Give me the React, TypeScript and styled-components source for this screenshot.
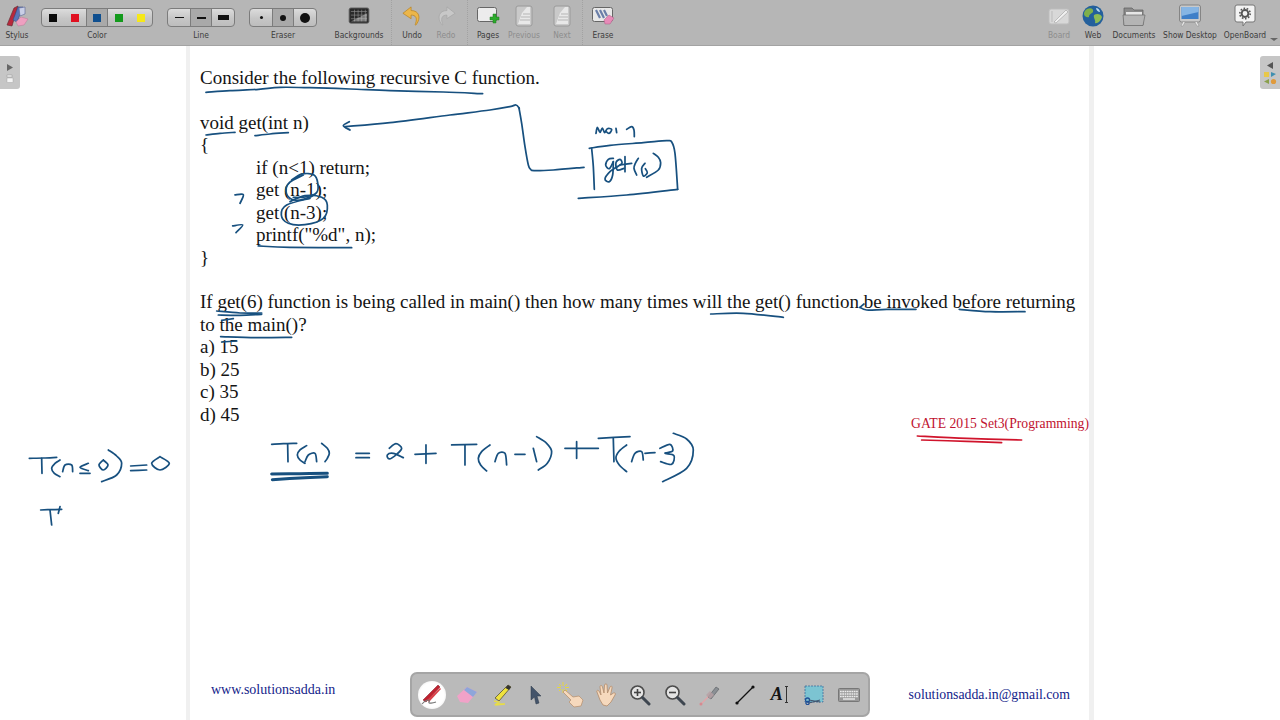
import * as React from 'react';
import styled, { createGlobalStyle } from 'styled-components';

const GlobalStyle = createGlobalStyle`
  html, body { margin: 0; padding: 0; background: #fff; }
  #root { width: 1280px; height: 720px; overflow: hidden; }
`;

const Screen = styled.div`
  position: relative;
  width: 1280px;
  height: 720px;
  display: flex;
  flex-direction: column;
  overflow: hidden;
  background: #fff;
`;

/* ---------- top toolbar ---------- */

const Toolbar = styled.div`
  height: 45px;
  flex: none;
  display: flex;
  background: #b6b6b6;
  border-bottom: 1px solid #a3a3a3;
  font-family: 'DejaVu Sans Condensed', 'DejaVu Sans', sans-serif;
`;

const Tool = styled.div<{ $w: number }>`
  width: ${p => p.$w}px;
  flex: none;
  height: 45px;
  display: flex;
  flex-direction: column;
  align-items: center;
`;

const Divider = styled.div<{ $before?: number; $after?: number }>`
  width: 0;
  height: 45px;
  flex: none;
  border-left: 1px dotted #a2a2a2;
  margin: 0 ${p => p.$after ?? 0}px 0 ${p => p.$before ?? 0}px;
`;

const IconSlot = styled.div`
  height: 29px;
  display: flex;
  align-items: center;
  justify-content: center;
  padding-top: 2px;
  box-sizing: border-box;
`;

const Label = styled.div<{ $off?: boolean }>`
  font-size: 8.4px;
  line-height: 12px;
  white-space: nowrap;
  color: ${p => (p.$off ? '#8d8d8d' : '#3c3c3c')};
`;

const Segments = styled.div`
  display: flex;
  height: 19px;
  box-sizing: border-box;
  margin: 8px 0 2px;
  border: 1px solid #7c7c7c;
  border-radius: 4px;
  overflow: hidden;
  background: linear-gradient(#dcdcdc, #c6c6c6 55%, #bdbdbd);
`;

const Segment = styled.div<{ $on?: boolean; $w: number }>`
  width: ${p => p.$w}px;
  flex: none;
  display: flex;
  align-items: center;
  justify-content: center;
  box-sizing: border-box;
  background: ${p => (p.$on ? '#a9a9a9' : 'transparent')};
  border-left: ${p => (p.$on ? '1px solid #7c7c7c' : 'none')};
  border-right: ${p => (p.$on ? '1px solid #7c7c7c' : 'none')};
`;

const Swatch = styled.span<{ $c: string }>`
  width: 8px;
  height: 8px;
  background: ${p => p.$c};
`;

const LineSample = styled.span<{ $w: number; $h: number }>`
  width: ${p => p.$w}px;
  height: ${p => p.$h}px;
  background: #111;
`;

const Dot = styled.span<{ $d: number }>`
  width: ${p => p.$d}px;
  height: ${p => p.$d}px;
  border-radius: 50%;
  background: #111;
`;

const Spacer = styled.div<{ $w?: number }>`
  flex: ${p => (p.$w ? 'none' : '1')};
  width: ${p => (p.$w ? `${p.$w}px` : 'auto')};
`;

const MoreArrow = styled.div`
  width: 0;
  height: 0;
  margin: 38px 0 0 2px;
  border-left: 4px solid transparent;
  border-right: 4px solid transparent;
  border-top: 3px solid #666;
`;

/* ---------- icons ---------- */

const StylusIcon = () => (
  <svg width="24" height="24" viewBox="0 0 24 24">
    <path d="M2 21 L9 4 L13 2 L7 22 Z" fill="#b8283c" stroke="#5a2a30" strokeWidth=".6" />
    <path d="M8 16 L13 3 L18 3 L12 18 Z" fill="#5b74b8" stroke="#394a7c" strokeWidth=".6" />
    <path d="M14 4 L20 3 L20 10 L15 12 Z" fill="#c9cfe6" stroke="#5a6796" strokeWidth=".6" />
    <path d="M11 18 L16 13 L23 15 L19 21 L13 22 Z" fill="#ee9fc0" stroke="#b87a96" strokeWidth=".5" />
  </svg>
);

const BackgroundsIcon = () => (
  <svg width="22" height="18" viewBox="0 0 24 20">
    <rect x="1" y="1" width="22" height="17" rx="2" fill="#2a2a2a" stroke="#6b6b6b" />
    <path d="M3 5 H21 M3 9 H21 M3 13 H21 M7 3 V16 M11 3 V16 M15 3 V16 M19 3 V16" stroke="#8c8c8c" strokeWidth=".7" />
    <path d="M3 16 L21 7 V16 Z" fill="#d9d9d9" opacity=".45" />
  </svg>
);

const UndoIcon = () => (
  <svg width="20" height="24" viewBox="0 0 22 24">
    <path d="M10 2 L1 9 L10 15 V11 C15 11 17 14 15 20 C14 22 15 23 16 21 C21 14 19 6 10 6 Z" fill="#ecb64a" stroke="#b78324" strokeWidth=".8" strokeLinejoin="round" />
  </svg>
);

const RedoIcon = () => (
  <svg width="20" height="24" viewBox="0 0 22 24">
    <path d="M12 2 L21 9 L12 15 V11 C7 11 5 14 7 20 C8 22 7 23 6 21 C1 14 3 6 12 6 Z" fill="#c8c8c8" stroke="#a6a6a6" strokeWidth=".8" strokeLinejoin="round" />
  </svg>
);

const PagesIcon = () => (
  <svg width="24" height="22" viewBox="0 0 24 22">
    <rect x="1.5" y="2.5" width="19" height="14" rx="2" fill="#ececec" stroke="#666" />
    <path d="M14 12 H17 V9 H20 V12 H23 V15 H20 V18 H17 V15 H14 Z" fill="#2cab2c" stroke="#1c7a1c" strokeWidth=".5" />
  </svg>
);

const PageCurlIcon = () => (
  <svg width="20" height="22" viewBox="0 0 20 22">
    <rect x="2" y="1" width="16" height="20" rx="2" fill="#c9c9c9" stroke="#9a9a9a" />
    <path d="M4 19 L8 8 L13 2 H16 V19 Z" fill="#e8e8e8" />
    <path d="M9 9 H16 M7 12 H16 M6 15 H16" stroke="#b5b5b5" strokeWidth="1" />
  </svg>
);

const EraseIcon = () => (
  <svg width="24" height="22" viewBox="0 0 24 22">
    <rect x="1.5" y="2.5" width="20" height="14" rx="2" fill="#e8e8e8" stroke="#666" />
    <path d="M5 5 L9 13 M9 5 L13 13 M13 5 L16 11" stroke="#6a7ea8" strokeWidth="2.2" />
    <path d="M13 15 L18 10 L23 13 L19 19 L14 19 Z" fill="#e78ab8" stroke="#a85f85" strokeWidth=".5" />
  </svg>
);

const BoardIcon = () => (
  <svg width="22" height="20" viewBox="0 0 22 20">
    <rect x="1" y="3" width="20" height="15" rx="2" fill="#d8d8d8" stroke="#bdbdbd" />
    <path d="M6 16 L18 4 L20 6 L8 17 Z" fill="#f0f0f0" stroke="#9f9f9f" strokeWidth=".6" />
    <path d="M4 5 V16" stroke="#bbb" strokeWidth="1" />
  </svg>
);

const GlobeIcon = () => (
  <svg width="22" height="22" viewBox="0 0 22 22">
    <circle cx="11" cy="11" r="10.5" fill="#24609c" />
    <path d="M5 4 C9 2 12 4 11 7 C9 9 7 9 7 12 C5 13 2 11 2 9 C2 7 3 5 5 4 Z" fill="#7fb04a" />
    <path d="M12 10 C15 8 19 9 20 12 C19 16 15 19 13 18 C14 15 11 13 12 10 Z" fill="#8dbb55" />
    <path d="M14 3 C16 3 18 5 18 7 C16 7 14 5 14 3 Z" fill="#b5d8f0" />
  </svg>
);

const FolderIcon = () => (
  <svg width="24" height="22" viewBox="0 0 24 22">
    <path d="M2 3 H10 L12 5 H21 V20 H2 Z" fill="#8b8b8b" stroke="#5d5d5d" strokeWidth=".7" />
    <path d="M4 7 H20 V11 H4 Z" fill="#e6e6e6" />
    <path d="M1 10 H23 L21 20.5 H2 Z" fill="#b4b4b4" stroke="#6a6a6a" strokeWidth=".7" />
  </svg>
);

const DesktopIcon = () => (
  <svg width="24" height="24" viewBox="0 0 24 24">
    <rect x="1.5" y="1" width="21" height="17" rx="2" fill="#c9c9c9" stroke="#858585" />
    <rect x="3.5" y="3" width="17" height="12" fill="#3f7fc8" />
    <path d="M3.5 3 H20.5 V8 L3.5 12 Z" fill="#86b5e4" />
    <path d="M5 18 L3 22 H5 L7 18 M19 18 L21 22 H19 L17 18" fill="#eee" stroke="#888" strokeWidth=".5" />
  </svg>
);

const OpenBoardIcon = () => (
  <svg width="22" height="24" viewBox="0 0 22 24">
    <path d="M3 1 H19 Q21 1 21 3 V16 Q21 18 19 18 H12 L9 22 V18 H3 Q1 18 1 16 V3 Q1 1 3 1 Z" fill="#f3f3f3" stroke="#777" />
    <circle cx="11" cy="9.5" r="3.4" fill="none" stroke="#555" strokeWidth="2" />
    <circle cx="11" cy="9.5" r="5.2" fill="none" stroke="#555" strokeWidth="1.6" strokeDasharray="1.6 1.6" />
  </svg>
);

/* palette icons */

const PenIcon = () => (
  <svg width="24" height="22" viewBox="0 0 24 22">
    <path d="M3 16 L18 1 L20 3 L6 18 Z" fill="#c02230" stroke="#7b1622" strokeWidth=".5" />
    <path d="M7 16 L20 4 L21 5 L9 18 Z" fill="#d84048" />
    <path d="M2 20 C6 15 11 15 9 18 C8 20 13 19 16 18" fill="none" stroke="#777" strokeWidth="1.1" />
  </svg>
);

const EraserIcon = () => (
  <svg width="22" height="20" viewBox="0 0 22 20">
    <path d="M1 11 L11 2 L21 7 L12 18 L4 17 Z" fill="#f1a2c8" />
    <path d="M8 5 L11 2 L21 7 L17 12 Z" fill="#8ea6da" />
  </svg>
);

const MarkerIcon = () => (
  <svg width="22" height="22" viewBox="0 0 22 22">
    <path d="M4 14 L17 1 L20 3 L8 17 Z" fill="#efe23e" stroke="#55523a" strokeWidth=".8" />
    <path d="M17 1 L20 3 L18 6 L14.5 4 Z" fill="#333" />
    <path d="M3 17 L8 18 L5 20 L14 20 L4 21" fill="none" stroke="#e8dd45" strokeWidth="1.4" />
  </svg>
);

const ArrowIcon = () => (
  <svg width="14" height="20" viewBox="0 0 14 20">
    <path d="M2 1 L12 11 L8 11 L10 18 L7 19 L5.5 12 L2 15 Z" fill="#44546a" stroke="#2d3848" strokeWidth=".5" />
  </svg>
);

const skin = '#f6d9bd';

const PointerIcon = () => (
  <svg width="28" height="26" viewBox="0 0 28 26">
    <path d="M6 0 V4 M6 7 V11 M0 5.5 H4 M8 5.5 H12 M2 2 L4 4 M10 2 L8 4 M2 9 L4 7 M10 9 L8 7" stroke="#e6d640" strokeWidth="1" />
    <path d="M8 8 L16 15 L22 14 L26 18 L24 24 L17 25 L12 20 L14 18 L6 10 Z" fill={skin} stroke="#b48c6a" strokeWidth=".7" />
  </svg>
);

const HandIcon = () => (
  <svg width="22" height="24" viewBox="0 0 22 24">
    <path d="M5 17 L2 9 C1 7 3 7 4 8 L6 12 L5 4 C5 2 7 2 7.5 4 L9 10 L9.5 2 C10 0.5 12 .5 12 2 L12.5 10 L15 4 C16 2.5 17.5 3 17 5 L15.5 12 L18.5 10 C20 9.5 21 10.5 20 12 L16 19 L12 23 L8 22 Z" fill={skin} stroke="#b48c6a" strokeWidth=".8" />
  </svg>
);

const ZoomIcon = ({ plus }: { plus?: boolean }) => (
  <svg width="22" height="22" viewBox="0 0 22 22">
    <circle cx="8.5" cy="8.5" r="6.5" fill="#e4e4e4" stroke="#4b4b4b" strokeWidth="1.6" />
    <path d="M5 8.5 H12" stroke="#444" strokeWidth="1.6" />
    {plus && <path d="M8.5 5 V12" stroke="#444" strokeWidth="1.6" />}
    <path d="M13.5 13.5 L20 20" stroke="#3e4650" strokeWidth="3" strokeLinecap="round" />
  </svg>
);

const LaserIcon = () => (
  <svg width="22" height="22" viewBox="0 0 22 22">
    <path d="M1 21 L11 11" stroke="#e3a4a8" strokeWidth="1.2" />
    <path d="M9 13 L17 3 L20 5 L12 15 Z" fill="#8a8f94" stroke="#55595e" strokeWidth=".6" />
    <path d="M7 11 L11 7 L15 11 L11 15 Z" fill="#b8a0a4" opacity=".8" />
    <circle cx="2" cy="20" r="1.5" fill="#d68a90" />
  </svg>
);

const LineIcon = () => (
  <svg width="20" height="20" viewBox="0 0 20 20">
    <path d="M2 18 L18 2" stroke="#111" strokeWidth="1.3" />
    <circle cx="2" cy="18" r="1.6" fill="#111" />
    <circle cx="18" cy="2" r="1.6" fill="#111" />
  </svg>
);

const TextTool = styled.span`
  display: flex;
  align-items: center;
  font-family: 'Liberation Serif', serif;
  font-size: 18px;
  font-weight: 700;
  font-style: italic;
  color: #151515;
`;

const Caret = styled.span`
  position: relative;
  width: 1px;
  height: 17px;
  margin: 0 1px 0 3px;
  background: #333;
  &::before, &::after {
    content: '';
    position: absolute;
    left: -1px;
    width: 3px;
    height: 1px;
    background: #333;
  }
  &::before { top: 0; }
  &::after { bottom: 0; }
`;

const CaptureIcon = () => (
  <svg width="20" height="20" viewBox="0 0 20 20">
    <rect x="1" y="1" width="18" height="16" fill="#7cc4d2" stroke="#3c6f9c" strokeWidth=".8" strokeDasharray="2 1" />
    <circle cx="3.5" cy="15" r="2" fill="none" stroke="#1f4f96" strokeWidth="1.3" />
    <circle cx="3.5" cy="18" r="1.6" fill="none" stroke="#1f4f96" strokeWidth="1.3" />
    <path d="M5 15 L16 17 M5 18 L16 15" stroke="#40536e" strokeWidth="1" />
  </svg>
);

const KeyboardIcon = () => (
  <svg width="22" height="14" viewBox="0 0 22 14">
    <rect x=".5" y=".5" width="21" height="13" rx="1" fill="#999" stroke="#777" />
    <path d="M2 3.5 H20 M2 6 H20 M2 8.5 H20" stroke="#ececec" strokeWidth="1.3" strokeDasharray="1.7 .6" />
    <path d="M5 11 H17" stroke="#ececec" strokeWidth="1.4" />
  </svg>
);

/* ---------- stage ---------- */

const Stage = styled.div`
  flex: 1;
  min-height: 0;
  display: flex;
`;

const Sheet = styled.div`
  width: 908px;
  margin-left: 186px;
  box-sizing: border-box;
  display: flex;
  flex-direction: column;
  background: #fff;
  border-left: 4px solid #f0f0f0;
  border-right: 5px solid #f0f0f0;
  padding: 21px 0 0 10px;
  font-family: 'Liberation Serif', serif;
  color: #141414;
`;

const TextLine = styled.div<{ $indent?: boolean }>`
  height: 22.45px;
  line-height: 22.45px;
  font-size: 19px;
  white-space: nowrap;
  padding-left: ${p => (p.$indent ? '56px' : '0')};
`;

const Source = styled.div`
  align-self: flex-end;
  margin-top: -11px;
  font-size: 13.7px;
  line-height: 18px;
  color: #bf1230;
  white-space: nowrap;
`;

const SheetFooter = styled.div`
  margin-top: auto;
  padding: 0 19px 16px 11px;
  display: flex;
  justify-content: space-between;
  align-items: flex-start;
  font-size: 14px;
  line-height: 18px;
  color: #14238a;
`;

const MailLink = styled.span`
  margin-top: 5px;
  font-size: 13.8px;
`;

const SideTab = styled.div<{ $side: 'left' | 'right' }>`
  position: absolute;
  top: 56px;
  ${p => p.$side}: 0;
  width: 20px;
  height: 33px;
  background: #c6c6c6;
  border-radius: ${p => (p.$side === 'left' ? '0 3px 3px 0' : '3px 0 0 3px')};
  display: flex;
  align-items: center;
  justify-content: center;
`;

/* ---------- floating palette ---------- */

const Palette = styled.div`
  position: absolute;
  left: 410px;
  top: 672px;
  width: 460px;
  height: 45px;
  box-sizing: border-box;
  padding-left: 3px;
  display: flex;
  align-items: center;
  background: #bababa;
  border: 2px solid #a5a5a5;
  border-radius: 7px;
`;

const PaletteButton = styled.div<{ $on?: boolean }>`
  width: 34.7px;
  height: 34px;
  flex: none;
  display: flex;
  align-items: center;
  justify-content: center;
  position: relative;
  &::before {
    content: '';
    display: ${p => (p.$on ? 'block' : 'none')};
    position: absolute;
    left: 3px;
    top: 3px;
    width: 28px;
    height: 28px;
    border-radius: 50%;
    background: radial-gradient(#fff 60%, #dcdcdc);
  }
  > * {
    position: relative;
  }
`;

/* ---------- ink ---------- */

const InkLayer = styled.svg`
  position: absolute;
  left: 0;
  top: 0;
  width: 1280px;
  height: 720px;
  pointer-events: none;
`;

const smooth = (list: string) => {
  const n = list.trim().split(/\s+/).map(Number);
  const p: number[][] = [];
  for (let i = 0; i < n.length; i += 2) p.push([n[i], n[i + 1]]);
  let d = `M${p[0][0]} ${p[0][1]}`;
  for (let i = 0; i < p.length - 1; i++) {
    const a = p[Math.max(i - 1, 0)], b = p[i], c = p[i + 1], e = p[Math.min(i + 2, p.length - 1)];
    d += ` C${(b[0] + (c[0] - a[0]) / 6).toFixed(1)} ${(b[1] + (c[1] - a[1]) / 6).toFixed(1)} ${(c[0] - (e[0] - b[0]) / 6).toFixed(1)} ${(c[1] - (e[1] - b[1]) / 6).toFixed(1)} ${c[0]} ${c[1]}`;
  }
  return d;
};

// stroke lists are in the coordinates of a 3x crop, origin given by x / y
const inkGroups = [
  {
    x: 190, y: 60, w: 5.2, lines: [
      '48 97 120 92 206 88 270 82 360 83 480 87 600 92 760 96 878 101',
      '48 225 90 220 135 217',
      '195 227 240 222 295 218',
      '478 185 460 197 480 210',
      '466 200 600 188 780 165 900 150 960 140 978 135 988 145',
      '305 360 335 342 372 345 383 368 380 398 340 418 305 418 288 395 298 368 340 345',
      '300 425 345 407 395 412 412 435 400 475 345 494 295 490 274 465 290 435 360 415',
      '310 412 340 412 372 404',
      '135 405 160 404 150 430',
      '128 498 158 495 138 518',
      '205 558 300 562 485 563',
    ],
  },
  {
    x: 510, y: 100, w: 5.2, lines: [
      '27 24 35 70 45 140 55 195 62 208 72 212 130 210 222 202',
      '238 145 300 136 400 128 470 122 485 126 495 160 503 268',
      '245 145 250 200 253 268',
      '205 295 350 285 503 268',
      '258 100 262 82 270 97 277 84 284 98 292 86 305 88 298 100 290 96',
      '318 85 320 98',
      '350 88 365 80 372 90 373 110',
      '310 175 295 178 287 195 298 206 310 185',
      '310 185 308 225 298 245 285 237 300 215 322 200',
      '322 200 336 190 330 178 318 188 322 210 342 205',
      '345 170 345 215',
      '330 195 365 190',
      '385 175 376 190 372 205 380 225',
      '405 190 395 205 400 228 412 218 406 206',
      '430 160 445 172 452 188 445 210 410 232',
    ],
  },
  {
    x: 190, y: 285, w: 5.2, lines: [
      '80 78 150 84 215 84',
      '85 90 150 91 215 88',
      '92 155 200 158 305 157',
      '95 106 130 101',
      '95 171 140 168',
      '245 478 280 476 320 475',
      '293 478 294 530',
      '350 482 330 495 322 510 330 525 345 535',
      '345 530 355 510 375 505 380 530',
      '395 475 412 490 418 505 412 520 405 530',
      '498 505 538 505',
      '498 518 538 518',
      '598 490 618 476 635 490 620 508 598 522 592 510 610 505 640 518',
      '675 508 738 505',
      '708 480 708 535',
      '785 480 860 478',
      '825 480 825 540',
      '900 480 875 500 865 520 872 540 890 558',
      '915 530 925 505 945 505 950 540',
      '975 508 1005 508',
      '1030 490 1040 530',
      '1040 455 1070 475 1085 500 1072 535 1045 555',
      '1125 490 1225 490',
      '1160 470 1160 520',
      '1225 460 1320 455',
      '1270 460 1272 530',
      '1310 480 1288 498 1278 518 1288 540 1310 560',
      '1325 530 1335 505 1355 500 1360 525',
      '1365 505 1395 503',
      '1410 490 1440 478 1448 498 1425 505 1452 512 1445 538 1412 530',
      '1450 445 1490 462 1510 495 1490 550 1418 590',
    ],
  },
  {
    x: 190, y: 285, w: 9, lines: ['245 567 330 566 412 565', '247 584 330 579 412 575'],
  },
  {
    x: 0, y: 430, w: 5.2, lines: [
      '88 85 130 84 170 82',
      '125 85 126 130',
      '180 90 165 100 155 115 163 130 180 140',
      '188 125 195 105 215 105 218 125',
      '265 100 240 112 265 122',
      '240 130 270 130',
      '310 90 297 105 310 120 324 105 310 90',
      '325 60 350 78 365 100 350 135 305 155',
      '392 108 440 105',
      '392 122 440 120',
      '480 80 455 100 480 120 508 100 480 80',
      '122 240 150 239 185 238',
      '150 240 155 285',
      '180 230 175 250',
    ],
  },
  {
    x: 700, y: 290, w: 5.2, lines: [
      '32 72 130 70 250 82',
      '480 52 500 60 560 58 648 58',
      '492 42 480 52',
      '778 58 870 65 975 65',
    ],
  },
];

const redInk = ['652 438 800 445 965 450', '665 450 800 454 905 458'];

const Ink = () => (
  <InkLayer viewBox="0 0 1280 720">
    <g fill="none" strokeLinecap="round" strokeLinejoin="round">
      {inkGroups.map((g, i) => (
        <g key={i} transform={`translate(${g.x} ${g.y}) scale(.3333)`} stroke="#17507f" strokeWidth={g.w}>
          {g.lines.map((l, j) => <path key={j} d={smooth(l)} />)}
        </g>
      ))}
      <g transform="translate(700 290) scale(.3333)" stroke="#d0142c" strokeWidth="5">
        {redInk.map((l, j) => <path key={j} d={smooth(l)} />)}
      </g>
    </g>
  </InkLayer>
);

/* ---------- page ---------- */

const colors = ['#0a0a0a', '#e01020', '#0f4f8f', '#139a1c', '#f6e818'];

export default function App() {
  return (
    <Screen>
      <GlobalStyle />
      <Toolbar>
        <Tool $w={34}><IconSlot><StylusIcon /></IconSlot><Label>Stylus</Label></Tool>
        <Spacer $w={7} />
        <Tool $w={112}>
          <Segments>
            {colors.map((c, i) => (
              <Segment key={c} $w={22} $on={i === 2}><Swatch $c={c} /></Segment>
            ))}
          </Segments>
          <Label>Color</Label>
        </Tool>
        <Spacer $w={14} />
        <Tool $w={68}>
          <Segments>
            <Segment $w={22}><LineSample $w={9} $h={1} /></Segment>
            <Segment $w={22} $on><LineSample $w={9} $h={2} /></Segment>
            <Segment $w={22}><LineSample $w={11} $h={5} /></Segment>
          </Segments>
          <Label>Line</Label>
        </Tool>
        <Spacer $w={14} />
        <Tool $w={68}>
          <Segments>
            <Segment $w={22}><Dot $d={3} /></Segment>
            <Segment $w={22} $on><Dot $d={6} /></Segment>
            <Segment $w={22}><Dot $d={10} /></Segment>
          </Segments>
          <Label>Eraser</Label>
        </Tool>
        <Spacer $w={10} />
        <Tool $w={64}><IconSlot><BackgroundsIcon /></IconSlot><Label>Backgrounds</Label></Tool>
        <Divider $after={3} />
        <Tool $w={34}><IconSlot><UndoIcon /></IconSlot><Label>Undo</Label></Tool>
        <Tool $w={34}><IconSlot><RedoIcon /></IconSlot><Label $off>Redo</Label></Tool>
        <Divider $before={4} $after={3} />
        <Tool $w={34}><IconSlot><PagesIcon /></IconSlot><Label>Pages</Label></Tool>
        <Tool $w={38}><IconSlot><PageCurlIcon /></IconSlot><Label $off>Previous</Label></Tool>
        <Tool $w={38}><IconSlot><PageCurlIcon /></IconSlot><Label $off>Next</Label></Tool>
        <Divider $before={1} />
        <Tool $w={40}><IconSlot><EraseIcon /></IconSlot><Label>Erase</Label></Tool>
        <Spacer />
        <Tool $w={34}><IconSlot><BoardIcon /></IconSlot><Label $off>Board</Label></Tool>
        <Tool $w={34}><IconSlot><GlobeIcon /></IconSlot><Label>Web</Label></Tool>
        <Tool $w={48}><IconSlot><FolderIcon /></IconSlot><Label>Documents</Label></Tool>
        <Tool $w={64}><IconSlot><DesktopIcon /></IconSlot><Label>Show Desktop</Label></Tool>
        <Tool $w={46}><IconSlot><OpenBoardIcon /></IconSlot><Label>OpenBoard</Label></Tool>
        <MoreArrow />
        <Spacer $w={2} />
      </Toolbar>

      <Stage>
        <Sheet>
          <TextLine>Consider the following recursive C function.</TextLine>
          <TextLine />
          <TextLine>void get(int n)</TextLine>
          <TextLine>{'{'}</TextLine>
          <TextLine $indent>if (n&lt;1) return;</TextLine>
          <TextLine $indent>get (n-1);</TextLine>
          <TextLine $indent>get (n-3);</TextLine>
          <TextLine $indent>printf("%d", n);</TextLine>
          <TextLine>{'}'}</TextLine>
          <TextLine />
          <TextLine>If get(6) function is being called in main() then how many times will the get() function be invoked before returning</TextLine>
          <TextLine>to the main()?</TextLine>
          <TextLine>a) 15</TextLine>
          <TextLine>b) 25</TextLine>
          <TextLine>c) 35</TextLine>
          <TextLine>d) 45</TextLine>
          <Source>GATE 2015 Set3(Programming)</Source>
          <SheetFooter>
            <span>www.solutionsadda.in</span>
            <MailLink>solutionsadda.in@gmail.com</MailLink>
          </SheetFooter>
        </Sheet>
      </Stage>

      <SideTab $side="left">
        <svg width="10" height="22" viewBox="0 0 10 22">
          <path d="M2 2 L8 5.5 L2 9 Z" fill="#666" />
          <rect x="2" y="13" width="5" height="2" fill="#eee" stroke="#888" strokeWidth=".4" />
          <rect x="2" y="16" width="6" height="4.5" fill="#f4f4f4" stroke="#999" strokeWidth=".4" />
        </svg>
      </SideTab>
      <SideTab $side="right">
        <svg width="14" height="24" viewBox="0 0 14 24">
          <path d="M10 1 L4 4.5 L10 8 Z" fill="#555" />
          <rect x="1" y="11" width="5" height="5" fill="#e8c84a" />
          <path d="M8 11 L13 13 L8 16 Z" fill="#3f8fb0" />
          <path d="M6 18 L1 20.5 L6 23 Z" fill="#8aa04c" />
          <circle cx="10.5" cy="20.5" r="2.6" fill="#e09a3c" />
        </svg>
      </SideTab>

      <Ink />

      <Palette>
        <PaletteButton $on><PenIcon /></PaletteButton>
        <PaletteButton><EraserIcon /></PaletteButton>
        <PaletteButton><MarkerIcon /></PaletteButton>
        <PaletteButton><ArrowIcon /></PaletteButton>
        <PaletteButton><PointerIcon /></PaletteButton>
        <PaletteButton><HandIcon /></PaletteButton>
        <PaletteButton><ZoomIcon plus /></PaletteButton>
        <PaletteButton><ZoomIcon /></PaletteButton>
        <PaletteButton><LaserIcon /></PaletteButton>
        <PaletteButton><LineIcon /></PaletteButton>
        <PaletteButton><TextTool>A<Caret /></TextTool></PaletteButton>
        <PaletteButton><CaptureIcon /></PaletteButton>
        <PaletteButton><KeyboardIcon /></PaletteButton>
      </Palette>
    </Screen>
  );
}
